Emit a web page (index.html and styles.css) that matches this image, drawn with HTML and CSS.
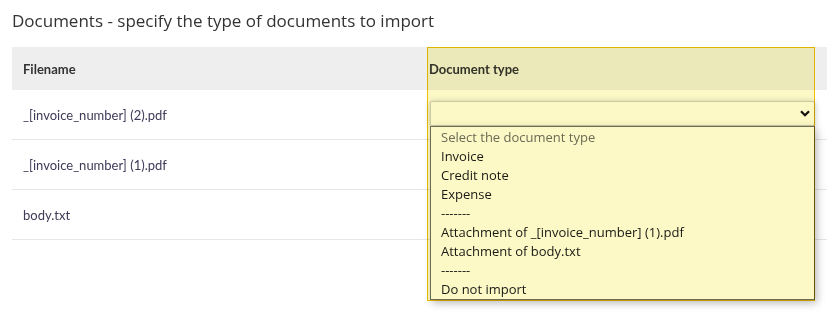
FILE: index.html
```html
<!DOCTYPE html>
<html>
<head>
<meta charset="utf-8">
<link rel="stylesheet" href="styles.css">
</head>
<body>
<div class="page">
  <h1 class="title">Documents - specify the type of documents to import</h1>
  <table class="docs">
    <thead>
      <tr><th class="col-name">Filename</th><th class="col-type">Document type</th></tr>
    </thead>
    <tbody>
      <tr>
        <td>_[invoice_number] (2).pdf</td>
        <td class="type-cell">
          <div class="select-wrap">
            <div class="select">
              <svg class="chev" width="10" height="7" viewBox="0 0 10 7"><path d="M1 1.2 L5 5.2 L9 1.2" fill="none" stroke="#111" stroke-width="2.2"/></svg>
            </div>
            <ul class="dropdown">
              <li class="placeholder">Select the document type</li>
              <li>Invoice</li>
              <li>Credit note</li>
              <li>Expense</li>
              <li>-------</li>
              <li>Attachment of _[invoice_number] (1).pdf</li>
              <li>Attachment of body.txt</li>
              <li>-------</li>
              <li>Do not import</li>
            </ul>
          </div>
        </td>
      </tr>
      <tr><td>_[invoice_number] (1).pdf</td><td></td></tr>
      <tr><td>body.txt</td><td></td></tr>
    </tbody>
  </table>
  <div class="highlight"></div>
</div>
</body>
</html>
```
FILE: styles.css
```css
html, body { margin: 0; padding: 0; background: #fff; }
body { min-height: 319px; }
.page { position: relative; padding: 0 8px 0 12px; min-height: 319px; }
.title {
  margin: 0;
  padding-top: 8px;
  font-family: "Open Sans", sans-serif;
  font-weight: 400;
  font-size: 17px;
  line-height: 25px;
  color: #333;
  height: 39px;
}
.docs {
  width: 815px;
  border-collapse: collapse;
  font-family: Lato, sans-serif;
  font-size: 13px;
  color: #3f3a57;
}
.docs th {
  background: #eeeeee;
  height: 43px;
  padding: 0 11px;
  text-align: left;
  font-weight: 700;
  color: #333;
  vertical-align: middle;
}
.docs th.col-name { width: 393px; }
.docs th.col-type { padding-left: 2px; }
.docs td {
  height: 49px;
  padding: 0 11px;
  border-bottom: 1px solid #e6e6e6;
  vertical-align: middle;
}
.docs td.type-cell { padding: 0 0 0 3px; vertical-align: top; }
.select-wrap { position: relative; padding-top: 11px; }
.select {
  height: 23px;
  width: 383px;
  border: 1px solid #cfcfcf;
  border-radius: 2px;
  background: #fff;
  box-shadow: 0 1px 6px rgba(0,0,0,0.25);
  display: flex;
  align-items: center;
  justify-content: flex-end;
}
.chev { margin-right: 4px; }
.dropdown {
  position: absolute;
  top: 36px;
  left: 0;
  width: 383px;
  margin: 0;
  padding: 1px 0 0 0;
  list-style: none;
  background: #fff;
  border: 1px solid #6f6f6f;
  box-shadow: 2px 3px 8px rgba(0,0,0,0.28);
  font-family: "Open Sans", sans-serif;
  font-size: 13px;
  color: #1a1a1a;
  z-index: 2;
}
.dropdown li {
  height: 19px;
  line-height: 19px;
  padding-left: 10px;
}
.dropdown li.placeholder { color: #6d6d6d; }
.highlight {
  position: absolute;
  left: 427px;
  top: 47px;
  width: 386px;
  height: 252px;
  border: 1px solid #f0c000;
  background: #fcf9c6;
  mix-blend-mode: multiply;
  z-index: 3;
  pointer-events: none;
}
```
